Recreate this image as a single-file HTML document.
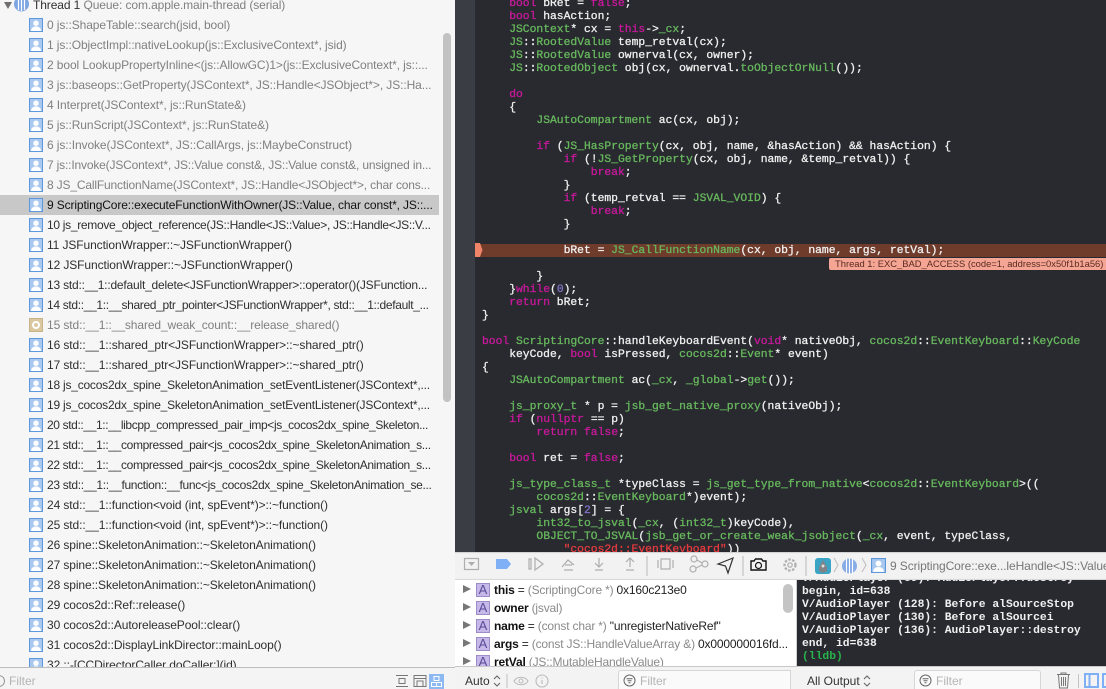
<!DOCTYPE html>
<html><head><meta charset="utf-8"><style>
html,body{margin:0;padding:0;width:1106px;height:689px;overflow:hidden;background:#f5f5f5}
body{position:relative;font-family:"Liberation Sans",sans-serif}
div,svg,span.a{box-sizing:border-box}
.abs{position:absolute}
#left{position:absolute;left:0;top:0;width:455px;height:667px;background:#f6f6f6;overflow:hidden}
.r{position:absolute;left:47px;width:392px;height:20px;line-height:20px;font-size:12px;color:#2f2f2f;white-space:nowrap;overflow:hidden;letter-spacing:-.1px}
.g{color:#808080}
.ic{position:absolute;left:29px;width:14px;height:14px}
#code{position:absolute;left:455px;top:0;width:651px;height:552px;background:#292a30;overflow:hidden}
#gut{position:absolute;left:0;top:0;width:20px;height:552px;background:#3b3d45}
.l{position:absolute;left:27px;height:13px;margin-top:1px;font:11.33px/13px "Liberation Mono",monospace;color:#f0f0f0;white-space:pre;-webkit-text-stroke:.3px}
.k{color:#c8189b}.t{color:#67b85d}.s{color:#e63a3e}.n{color:#8272c8}
#console{position:absolute;left:797px;top:580px;width:309px;height:86px;background:#292a30;overflow:hidden}
.c{position:absolute;left:5px;margin-top:1px;font:bold 11.33px/13px "Liberation Mono",monospace;color:#f0f0f0;white-space:pre}
#vars{position:absolute;left:455px;top:580px;width:342px;height:86px;background:#fff;overflow:hidden}
.v{position:absolute;left:39px;height:18px;line-height:18px;font-size:12px;color:#222;white-space:nowrap;letter-spacing:-.18px}
.v b{color:#111}.v i{font-style:normal;color:#8a8a8a}
.tri{position:absolute;left:8px;width:0;height:0;border-left:8px solid #777;border-top:4.5px solid transparent;border-bottom:4.5px solid transparent}
.A{position:absolute;left:21px;width:14px;height:14px;background:#c6b9ea;border:1px solid #9d8cc8;color:#5b4a96;font-size:13px;line-height:12px;text-align:center}
.f{position:absolute;font-size:12px;color:#b4b4b4}
</style></head><body>
<svg width="0" height="0" style="position:absolute"><defs>
<symbol id="p" viewBox="0 0 14 14"><rect width="14" height="14" fill="#5e97dc"/><rect x="1" y="1" width="12" height="12" fill="#a8c8ef"/><circle cx="7" cy="5.2" r="2.7" fill="#fff"/><path d="M2 13c0-3 2-4 3.500-4.500h3C10 9 12 10 12 13z" fill="#fff"/></symbol>
</defs></svg>

<div id="left">
<svg class="abs" style="left:3px;top:0" width="28" height="12" viewBox="0 0 28 12"><path d="M1 2h8l-4 7z" fill="#6f6f6f"/><circle cx="18.500" cy="4" r="7.500" fill="#7da5e2"/><path d="M15.500 -3v13M18.500 -4v15M21.500 -3v13" stroke="#fff" stroke-width="1.200"/></svg>
<div class="r" style="left:33px;top:-5px;width:400px"><span style="color:#2f2f2f">Thread 1</span> <span class="g">Queue: com.apple.main-thread (serial)</span></div>

<svg class="ic" style="top:18px"><use href="#p"/></svg><div class="r g" style="top:15px">0 js::ShapeTable::search(jsid, bool)</div>
<svg class="ic" style="top:38px"><use href="#p"/></svg><div class="r g" style="top:35px">1 js::ObjectImpl::nativeLookup(js::ExclusiveContext*, jsid)</div>
<svg class="ic" style="top:58px"><use href="#p"/></svg><div class="r g" style="top:55px">2 bool LookupPropertyInline&lt;(js::AllowGC)1&gt;(js::ExclusiveContext*, js::...</div>
<svg class="ic" style="top:78px"><use href="#p"/></svg><div class="r g" style="top:75px">3 js::baseops::GetProperty(JSContext*, JS::Handle&lt;JSObject*&gt;, JS::Ha...</div>
<svg class="ic" style="top:98px"><use href="#p"/></svg><div class="r g" style="top:95px">4 Interpret(JSContext*, js::RunState&amp;)</div>
<svg class="ic" style="top:118px"><use href="#p"/></svg><div class="r g" style="top:115px">5 js::RunScript(JSContext*, js::RunState&amp;)</div>
<svg class="ic" style="top:138px"><use href="#p"/></svg><div class="r g" style="top:135px">6 js::Invoke(JSContext*, JS::CallArgs, js::MaybeConstruct)</div>
<svg class="ic" style="top:158px"><use href="#p"/></svg><div class="r g" style="top:155px;letter-spacing:-.17px">7 js::Invoke(JSContext*, JS::Value const&amp;, JS::Value const&amp;, unsigned in...</div>
<svg class="ic" style="top:178px"><use href="#p"/></svg><div class="r g" style="top:175px;letter-spacing:-.17px">8 JS_CallFunctionName(JSContext*, JS::Handle&lt;JSObject*&gt;, char cons...</div>
<div class="abs" style="left:0;top:195px;width:439px;height:20px;background:#c8c8c8"></div>
<svg class="ic" style="top:198px"><use href="#p"/></svg><div class="r" style="top:195px;color:#111;letter-spacing:-.13px">9 ScriptingCore::executeFunctionWithOwner(JS::Value, char const*, JS::...</div>
<svg class="ic" style="top:218px"><use href="#p"/></svg><div class="r" style="top:215px;letter-spacing:-.3px">10 js_remove_object_reference(JS::Handle&lt;JS::Value&gt;, JS::Handle&lt;JS::V...</div>
<svg class="ic" style="top:238px"><use href="#p"/></svg><div class="r" style="top:235px">11 JSFunctionWrapper::~JSFunctionWrapper()</div>
<svg class="ic" style="top:258px"><use href="#p"/></svg><div class="r" style="top:255px">12 JSFunctionWrapper::~JSFunctionWrapper()</div>
<svg class="ic" style="top:278px"><use href="#p"/></svg><div class="r" style="top:275px;letter-spacing:-.2px">13 std::__1::default_delete&lt;JSFunctionWrapper&gt;::operator()(JSFunction...</div>
<svg class="ic" style="top:298px"><use href="#p"/></svg><div class="r" style="top:295px;letter-spacing:-.33px">14 std::__1::__shared_ptr_pointer&lt;JSFunctionWrapper*, std::__1::default_...</div>
<svg class="ic" style="top:318px" viewBox="0 0 14 14"><rect width="14" height="14" fill="#c9b386"/><rect x="1" y="1" width="12" height="12" fill="#d9c8a0"/><circle cx="7" cy="7" r="3" fill="none" stroke="#fff" stroke-width="2"/></svg><div class="r g" style="top:315px">15 std::__1::__shared_weak_count::__release_shared()</div>
<svg class="ic" style="top:338px"><use href="#p"/></svg><div class="r" style="top:335px">16 std::__1::shared_ptr&lt;JSFunctionWrapper&gt;::~shared_ptr()</div>
<svg class="ic" style="top:358px"><use href="#p"/></svg><div class="r" style="top:355px">17 std::__1::shared_ptr&lt;JSFunctionWrapper&gt;::~shared_ptr()</div>
<svg class="ic" style="top:378px"><use href="#p"/></svg><div class="r" style="top:375px;letter-spacing:-.22px">18 js_cocos2dx_spine_SkeletonAnimation_setEventListener(JSContext*,...</div>
<svg class="ic" style="top:398px"><use href="#p"/></svg><div class="r" style="top:395px;letter-spacing:-.22px">19 js_cocos2dx_spine_SkeletonAnimation_setEventListener(JSContext*,...</div>
<svg class="ic" style="top:418px"><use href="#p"/></svg><div class="r" style="top:415px;letter-spacing:-.37px">20 std::__1::__libcpp_compressed_pair_imp&lt;js_cocos2dx_spine_Skeleton...</div>
<svg class="ic" style="top:438px"><use href="#p"/></svg><div class="r" style="top:435px;letter-spacing:-.36px">21 std::__1::__compressed_pair&lt;js_cocos2dx_spine_SkeletonAnimation_s...</div>
<svg class="ic" style="top:458px"><use href="#p"/></svg><div class="r" style="top:455px;letter-spacing:-.36px">22 std::__1::__compressed_pair&lt;js_cocos2dx_spine_SkeletonAnimation_s...</div>
<svg class="ic" style="top:478px"><use href="#p"/></svg><div class="r" style="top:475px;letter-spacing:-.33px">23 std::__1::__function::__func&lt;js_cocos2dx_spine_SkeletonAnimation_se...</div>
<svg class="ic" style="top:498px"><use href="#p"/></svg><div class="r" style="top:495px">24 std::__1::function&lt;void (int, spEvent*)&gt;::~function()</div>
<svg class="ic" style="top:518px"><use href="#p"/></svg><div class="r" style="top:515px">25 std::__1::function&lt;void (int, spEvent*)&gt;::~function()</div>
<svg class="ic" style="top:538px"><use href="#p"/></svg><div class="r" style="top:535px">26 spine::SkeletonAnimation::~SkeletonAnimation()</div>
<svg class="ic" style="top:558px"><use href="#p"/></svg><div class="r" style="top:555px">27 spine::SkeletonAnimation::~SkeletonAnimation()</div>
<svg class="ic" style="top:578px"><use href="#p"/></svg><div class="r" style="top:575px">28 spine::SkeletonAnimation::~SkeletonAnimation()</div>
<svg class="ic" style="top:598px"><use href="#p"/></svg><div class="r" style="top:595px">29 cocos2d::Ref::release()</div>
<svg class="ic" style="top:618px"><use href="#p"/></svg><div class="r" style="top:615px">30 cocos2d::AutoreleasePool::clear()</div>
<svg class="ic" style="top:638px"><use href="#p"/></svg><div class="r" style="top:635px">31 cocos2d::DisplayLinkDirector::mainLoop()</div>
<svg class="ic" style="top:658px"><use href="#p"/></svg><div class="r" style="top:655px">32 ::-[CCDirectorCaller doCaller:](id)</div>
<div class="abs" style="left:443px;top:33px;width:8px;height:369px;background:#c2c2c2;border-radius:4px"></div>
</div>

<div class="abs" style="left:0;top:667px;width:455px;height:1px;background:#bdbdbd"></div>
<div class="abs" style="left:0;top:668px;width:455px;height:21px;background:#f4f4f4"></div>
<svg class="abs" style="left:0;top:674px" width="5" height="14"><circle cx="-1" cy="7" r="5.500" fill="none" stroke="#999"/></svg>
<div class="f" style="left:9px;top:674px">Filter</div>
<svg class="abs" style="left:395px;top:674px" width="50" height="14" fill="none" stroke="#777"><path d="M1 1.500h12M1 12.500h12M4 4.500h6v5H4z"/><path d="M19 1.500h12v11H19zM22 12V7h6v5M19 4.500h12"/></svg>
<div class="abs" style="left:429px;top:674px;width:15px;height:15px;background:#8db9f2"></div>
<svg class="abs" style="left:429px;top:674px" width="15" height="15" fill="none" stroke="#fff"><path d="M5 2.500h5v4H5zM2.500 8.500h5v4h-5zM7.500 8.500h5v4h-5z"/></svg>

<div id="code">
<div id="gut"></div>
<div class="abs" style="left:20px;top:244px;width:631px;height:13px;background:#6f3c2c"></div>
<svg class="abs" style="left:20px;top:243px" width="8" height="14"><path d="M0 0h5l2.500 7L5 14H0z" fill="#f08468"/></svg>
<div class="l" style="top:-3px">    <span class="k">bool</span> bRet = <span class="k">false</span>;</div>
<div class="l" style="top:10px">    <span class="k">bool</span> hasAction;</div>
<div class="l" style="top:23px">    <span class="t">JSContext</span>* cx = <span class="k">this</span>-&gt;<span class="t">_cx</span>;</div>
<div class="l" style="top:36px">    <span class="t">JS</span>::<span class="t">RootedValue</span> temp_retval(cx);</div>
<div class="l" style="top:49px">    <span class="t">JS</span>::<span class="t">RootedValue</span> ownerval(cx, owner);</div>
<div class="l" style="top:62px">    <span class="t">JS</span>::<span class="t">RootedObject</span> obj(cx, ownerval.<span class="t">toObjectOrNull</span>());</div>
<div class="l" style="top:88px">    <span class="k">do</span></div>
<div class="l" style="top:101px">    {</div>
<div class="l" style="top:114px">        <span class="t">JSAutoCompartment</span> ac(cx, obj);</div>
<div class="l" style="top:140px">        <span class="k">if</span> (<span class="t">JS_HasProperty</span>(cx, obj, name, &amp;hasAction) &amp;&amp; hasAction) {</div>
<div class="l" style="top:153px">            <span class="k">if</span> (!<span class="t">JS_GetProperty</span>(cx, obj, name, &amp;temp_retval)) {</div>
<div class="l" style="top:166px">                <span class="k">break</span>;</div>
<div class="l" style="top:179px">            }</div>
<div class="l" style="top:192px">            <span class="k">if</span> (temp_retval == <span class="t">JSVAL_VOID</span>) {</div>
<div class="l" style="top:205px">                <span class="k">break</span>;</div>
<div class="l" style="top:218px">            }</div>
<div class="l" style="top:244px">            bRet = <span class="t">JS_CallFunctionName</span>(cx, obj, name, args, retVal);</div>
<div class="abs" style="left:374px;top:258px;width:277px;height:12px;background:#f5a594;border-radius:2px 0 0 2px;font-size:9.4px;line-height:12px;color:#5a2a20;padding-left:6px;white-space:nowrap;overflow:hidden">Thread 1: EXC_BAD_ACCESS (code=1, address=0x50f1b1a56)</div>
<div class="l" style="top:270px">        }</div>
<div class="l" style="top:283px">    }<span class="k">while</span>(<span class="n">0</span>);</div>
<div class="l" style="top:296px">    <span class="k">return</span> bRet;</div>
<div class="l" style="top:309px">}</div>
<div class="l" style="top:335px"><span class="k">bool</span> <span class="t">ScriptingCore</span>::handleKeyboardEvent(<span class="k">void</span>* nativeObj, <span class="t">cocos2d</span>::<span class="t">EventKeyboard</span>::<span class="t">KeyCode</span></div>
<div class="l" style="top:348px">    keyCode, <span class="k">bool</span> isPressed, <span class="t">cocos2d</span>::<span class="t">Event</span>* event)</div>
<div class="l" style="top:361px">{</div>
<div class="l" style="top:374px">    <span class="t">JSAutoCompartment</span> ac(<span class="t">_cx</span>, <span class="t">_global</span>-&gt;<span class="t">get</span>());</div>
<div class="l" style="top:400px">    <span class="t">js_proxy_t</span> * p = <span class="t">jsb_get_native_proxy</span>(nativeObj);</div>
<div class="l" style="top:413px">    <span class="k">if</span> (<span class="k">nullptr</span> == p)</div>
<div class="l" style="top:426px">        <span class="k">return</span> <span class="k">false</span>;</div>
<div class="l" style="top:452px">    <span class="k">bool</span> ret = <span class="k">false</span>;</div>
<div class="l" style="top:478px">    <span class="t">js_type_class_t</span> *typeClass = <span class="t">js_get_type_from_native</span>&lt;<span class="t">cocos2d</span>::<span class="t">EventKeyboard</span>&gt;((</div>
<div class="l" style="top:491px">        <span class="t">cocos2d</span>::<span class="t">EventKeyboard</span>*)event);</div>
<div class="l" style="top:504px">    <span class="t">jsval</span> args[<span class="n">2</span>] = {</div>
<div class="l" style="top:517px">        <span class="t">int32_to_jsval</span>(<span class="t">_cx</span>, (<span class="t">int32_t</span>)keyCode),</div>
<div class="l" style="top:530px">        <span class="t">OBJECT_TO_JSVAL</span>(<span class="t">jsb_get_or_create_weak_jsobject</span>(<span class="t">_cx</span>, event, typeClass,</div>
<div class="l" style="top:543px">            <span class="s">"cocos2d::EventKeyboard"</span>))</div>
</div>

<div class="abs" style="left:455px;top:552px;width:651px;height:28px;background:#f2f2f2"></div>
<svg class="abs" style="left:455px;top:552px" width="651" height="28" fill="none" stroke="#aeaeae" stroke-width="1.200">
<path d="M9.500 6.500h14v11h-14z"/><path d="M13 10h7l-3.500 4z" fill="#aeaeae" stroke="none"/>
<path d="M41 7h11l4 5-4 5H41z" fill="#7fb0f5" stroke="none"/>
<path d="M74 7h2v10h-2zM80 6v12l8-6z"/>
<path d="M107 15l6-7 6 5M110 13h7M109 18h9"/>
<path d="M144 6v8M140 11l4 4 4-4M140 18h8"/>
<path d="M175 15V7M171 10l4-4 4 4M171 18h8"/>
<path d="M192 4v20" stroke="#c4c4c4"/>
<path d="M206 7h9v10h-9zM203 8v8M218 8v8"/>
<circle cx="239" cy="7" r="3"/><circle cx="238" cy="17" r="3"/><circle cx="250" cy="12" r="3"/><path d="M242 8l5 3M241 16l6-3"/>
<path d="M263 12l15-6-5 15-2.500-7z" stroke="#333"/>
<path d="M288 4v20" stroke="#c4c4c4"/>
<path d="M296 9h3l1.500-2h6l1.500 2h3v9h-15z" stroke="#111" stroke-width="1.400"/><circle cx="303.500" cy="13.500" r="3" stroke="#111"/>
<circle cx="335" cy="13" r="5.500" stroke-width="2.200" stroke-dasharray="2.500 1.500"/><circle cx="335" cy="13" r="2.200"/>
<path d="M351 4v20" stroke="#c4c4c4"/>
<path d="M379 6l4 7-4 7M407 6l4 7-4 7" stroke="#c4c4c4"/>
<path d="M0 .5h651" stroke="#d4d4d4"/>
<path d="M0 27.500h651" stroke="#d9d9d9"/>
</svg>
<svg class="abs" style="left:815px;top:558px" width="50" height="17"><rect x="0" y="0" width="16" height="16" rx="3" fill="#3ba3c4"/><path d="M8 2l4 7v4l-4 2-4-2V9z" fill="#7f8388"/><circle cx="8" cy="8" r="1.500" fill="#ddd"/><circle cx="34.500" cy="8" r="7.500" fill="#88ace6"/><path d="M31.500 1v14M34.500 0v16M37.500 1v14" stroke="#fff" stroke-width="1.100"/></svg>
<svg class="abs" style="left:871px;top:558px;width:15px;height:15px"><use href="#p"/></svg>
<div class="abs" style="left:890px;top:552px;height:28px;line-height:28px;font-size:12px;color:#777;white-space:nowrap;width:216px;overflow:hidden;letter-spacing:-.1px">9 ScriptingCore::exe...leHandle&lt;JS::Value&gt;</div>

<div id="vars">
<div class="abs" style="left:328px;top:4px;width:10px;height:29px;background:#c4c4c4;border-radius:5px"></div>
<div class="tri" style="top:5px"></div><div class="A" style="top:3px">A</div><div class="v" style="top:1px"><b>this</b> = <i>(ScriptingCore *)</i> 0x160c213e0</div>
<div class="tri" style="top:23px"></div><div class="A" style="top:21px">A</div><div class="v" style="top:19px"><b>owner</b> <i>(jsval)</i></div>
<div class="tri" style="top:41px"></div><div class="A" style="top:39px">A</div><div class="v" style="top:37px"><b>name</b> = <i>(const char *)</i> "unregisterNativeRef"</div>
<div class="tri" style="top:59px"></div><div class="A" style="top:57px">A</div><div class="v" style="top:55px"><b>args</b> = <i>(const JS::HandleValueArray &amp;)</i> 0x000000016fd...</div>
<div class="tri" style="top:77px"></div><div class="A" style="top:75px">A</div><div class="v" style="top:73px"><b>retVal</b> <i>(JS::MutableHandleValue)</i></div>
</div>

<div class="abs" style="left:796px;top:580px;width:1px;height:109px;background:#cfcfcf"></div>
<div id="console">
<div class="c" style="top:-8px">V/AudioPlayer (89): AudioPlayer::destroy</div>
<div class="c" style="top:5px">begin, id=638</div>
<div class="c" style="top:18px">V/AudioPlayer (128): Before alSourceStop</div>
<div class="c" style="top:31px">V/AudioPlayer (130): Before alSourcei</div>
<div class="c" style="top:44px">V/AudioPlayer (136): AudioPlayer::destroy</div>
<div class="c" style="top:57px">end, id=638</div>
<div class="c" style="top:70px;color:#28b34c">(lldb)</div>
</div>

<div class="abs" style="left:455px;top:666px;width:651px;height:23px;background:#f3f3f3;border-top:1px solid #c8c8c8"></div>
<div class="abs" style="left:465px;top:670px;font-size:12px;line-height:22px;color:#333">Auto</div>
<svg class="abs" style="left:492px;top:674px" width="64" height="15" fill="none" stroke="#666" stroke-width="1.100"><path d="M2 5l3-3 3 3M2 9l3 3 3-3"/><path d="M15 0v14" stroke="#c4c4c4"/><path d="M22 7c3-5 11-5 14 0-3 5-11 5-14 0z" stroke="#bbb"/><circle cx="29" cy="7" r="2" stroke="#bbb"/><circle cx="50" cy="7" r="6" stroke="#bbb"/><path d="M50 6v4M50 3.500v1" stroke="#bbb"/></svg>
<div class="abs" style="left:618px;top:670px;width:172px;height:19px;background:#fafafa;border:1px solid #d6d6d6;border-bottom:none;border-radius:3px 3px 0 0"></div>
<svg class="abs" style="left:623px;top:674px" width="13" height="13" fill="none" stroke="#666"><circle cx="6.500" cy="6.500" r="5.500"/><path d="M3.500 4.800h6M4.500 6.800h4M5.500 8.800h2"/></svg>
<div class="f" style="left:640px;top:674px">Filter</div>

<div class="abs" style="left:780px;top:670px;width:11px;height:19px;background:#fafafa;border:1px solid #d6d6d6;border-left:none;border-bottom:none"></div>
<div class="abs" style="left:807px;top:670px;font-size:12px;line-height:22px;color:#333">All Output</div>
<svg class="abs" style="left:863px;top:674px" width="8" height="14" fill="none" stroke="#666" stroke-width="1.100"><path d="M1 5l3-3 3 3M1 9l3 3 3-3"/></svg>
<div class="abs" style="left:914px;top:670px;width:127px;height:19px;background:#fafafa;border:1px solid #d6d6d6;border-bottom:none;border-radius:3px 3px 0 0"></div>
<svg class="abs" style="left:919px;top:674px" width="13" height="13" fill="none" stroke="#666"><circle cx="6.500" cy="6.500" r="5.500"/><path d="M3.500 4.800h6M4.500 6.800h4M5.500 8.800h2"/></svg>
<div class="f" style="left:936px;top:674px">Filter</div>
<svg class="abs" style="left:1056px;top:672px" width="50" height="17" fill="none"><path d="M1 2.500h13M5 2.500V1h5v1.500M2.500 3l1 13h8l1-13M5.500 5v9M7.500 5v9M9.500 5v9" stroke="#777"/><path d="M22.500 2v14" stroke="#c4c4c4"/><rect x="29" y="2" width="13" height="13" stroke="#7fb0f5" stroke-width="2"/><path d="M33.500 2v13" stroke="#7fb0f5" stroke-width="2"/><rect x="47" y="2" width="13" height="13" stroke="#7fb0f5" stroke-width="2"/></svg>
</body></html>
